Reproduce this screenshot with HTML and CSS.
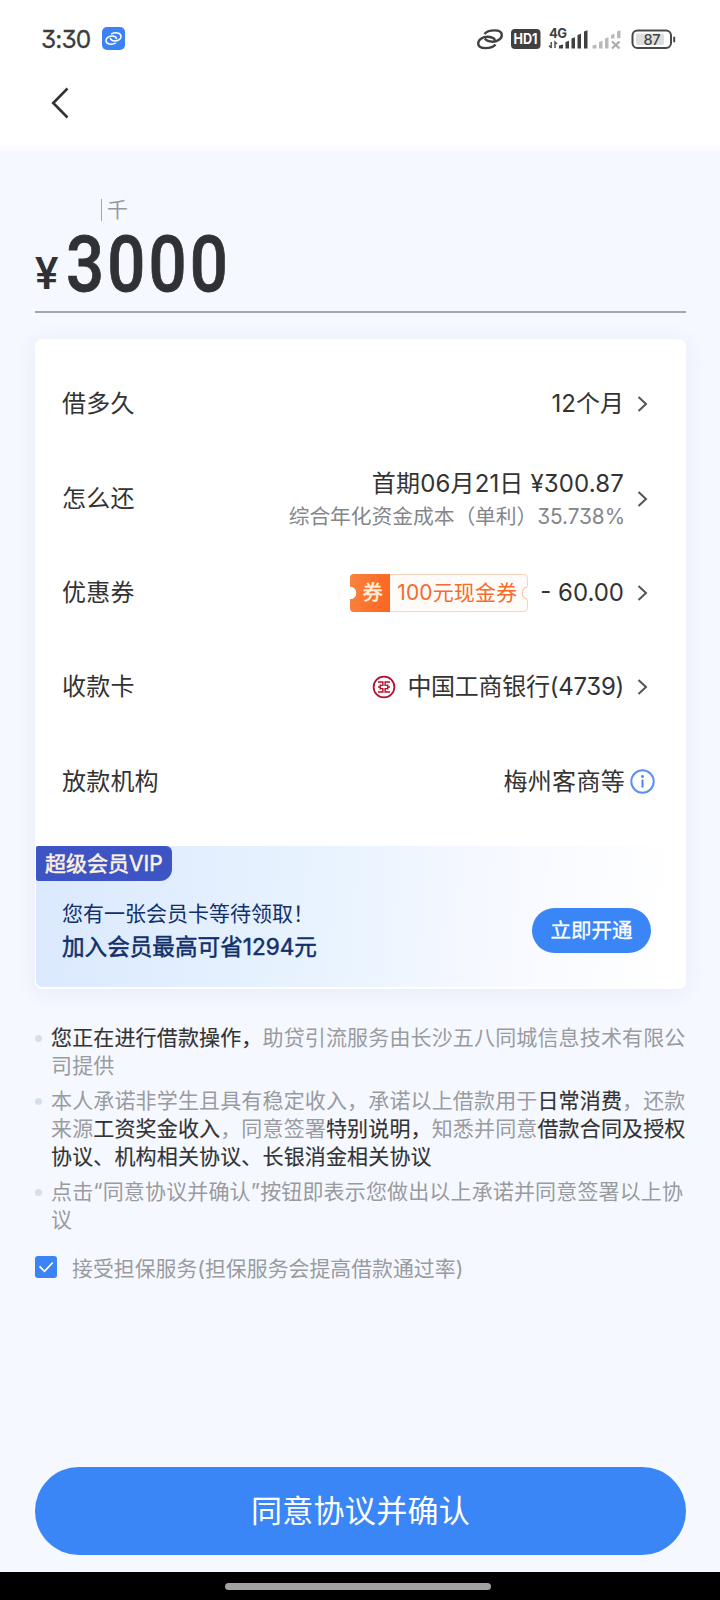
FILE: index.html
```html
<!DOCTYPE html>
<html lang="zh-CN">
<head>
<meta charset="utf-8">
<title>借款确认</title>
<link rel="stylesheet" href="styles.css">
</head>
<body>
<div class="screen">
  <header class="top">
    <div class="status">
      <span class="time">3:30</span>
      <svg class="app-icon" width="23" height="23" viewBox="0 0 23 23"><rect width="23" height="23" rx="5" fill="#3b82f7"/><g fill="none" stroke="#fff" stroke-width="1.500" stroke-linecap="round"><path d="M9.500 6.800C13 5 19 5.500 19 9.500C19 12.500 15.500 14 12.500 14C10.500 14 9 13 8.500 11.500"/><path d="M13.500 16.200C10 18 4 17.500 4 13.500C4 10.500 7.500 9 10.500 9C12.500 9 14 10 14.500 11.500"/></g></svg>
      <svg class="status-icons" width="204" height="30" viewBox="472 23 204 30">
        <g fill="none" stroke="#404040" stroke-width="2.400" stroke-linecap="butt"><path d="M484.500 33C488 28.500 501.800 27.500 501.800 34C501.800 38.500 496.500 40.700 492.500 40.700C489.500 40.700 486.500 39.800 484.800 37.600"/><path d="M495.500 43.500C492 48 478.200 49 478.200 42.500C478.200 38 483.500 35.800 487.500 35.800C490.500 35.800 493.500 36.700 495.200 38.900"/></g>
        <rect x="511" y="28" width="29.500" height="20" rx="4" fill="#404040"/>
        <text class="hd" x="513.500" y="42.800" textLength="24" lengthAdjust="spacingAndGlyphs">HD1</text>
        <text class="net" x="549" y="37" textLength="18">4G</text>
        <path d="M551.300 41v6M549 44.500l2.300 2.500M555 47v-6l2 2" fill="none" stroke="#555" stroke-width="1.500"/>
        <path d="M559 44.500l4-1v4h-4zM565.500 41l3.500-1.200v7.700h-3.500zM571.500 37.500l3.500-1.200v11.200h-3.500zM577.500 34l3.500-1.200v14.700h-3.500zM584 30.500l3.500-1.200v18.200h-3.500z" fill="#404040"/>
        <path d="M592.500 44.500l4-1v4h-4zM599 41l3.500-1.200v7.700h-3.500zM605 37.500l3.500-1.200v11.200h-3.500zM611 34l3.500-1.200v4.700h-3.500zM617 30.500l3.500-1.200v8h-3.500z" fill="#b9b9b9"/>
        <path d="M612 40.500l7.500 7M619.500 40.500l-7.500 7" stroke="#aaa" stroke-width="2.200"/>
        <rect x="632.500" y="29.500" width="38.500" height="17.500" rx="5" fill="none" stroke="#484848" stroke-width="2"/>
        <rect x="636" y="32.500" width="28" height="11.500" rx="2" fill="#dedede"/>
        <rect x="673.200" y="35.500" width="2" height="6" rx="1" fill="#484848"/>
        <text class="batt" x="643.500" y="43.500" textLength="17">87</text>
      </svg>
    </div>
    <svg class="back" width="20" height="32" viewBox="0 0 20 32"><path d="M17.500 1.500L3.200 16L17.500 30.500" fill="none" stroke="#333" stroke-width="2.600"/></svg>
  </header>

  <main class="content">
    <div class="unit">千</div>
    <div class="amount"><span class="yen">¥</span><span class="num">3000</span></div>

    <section class="card">
      <div class="row"><span class="label">借多久</span><span class="value">12个月</span><svg class="chev" width="12" height="18" viewBox="0 0 12 18"><path d="M1.500 2l7.500 7l-7.500 7" /></svg></div>
      <div class="row"><span class="label">怎么还</span><span class="value stack"><span class="first">首期06月21日 ¥300.87</span><small class="rate">综合年化资金成本（单利）35.738%</small></span><svg class="chev" width="12" height="18" viewBox="0 0 12 18"><path d="M1.500 2l7.500 7l-7.500 7" /></svg></div>
      <div class="row"><span class="label">优惠券</span>
        <span class="coupon"><span class="coupon-tag">券</span><span class="coupon-text">100元现金券</span><svg class="notch" width="9" height="14" viewBox="0 0 9 14"><path d="M9 0A7 7 0 0 0 9 14z" fill="#fff"/><path d="M8.500 .8A6.300 6.300 0 0 0 8.500 13.200" fill="none" stroke="#fbc9ad" stroke-width="1.200"/></svg></span>
        <span class="value discount">- 60.00</span><svg class="chev" width="12" height="18" viewBox="0 0 12 18"><path d="M1.500 2l7.500 7l-7.500 7" /></svg></div>
      <div class="row"><span class="label">收款卡</span>
        <svg class="bank" width="24" height="24" viewBox="0 0 24 24"><circle cx="12" cy="12" r="10.400" fill="none" stroke="#b5122f" stroke-width="1.800"/><path d="M6 7h4.900v3.400H8.300M6 10.400V10.400M8.300 9.600v4.800M8.300 13.600h2.600V17H6M18 7h-4.900v3.400h2.600M15.700 9.600v4.800M15.700 13.600h-2.600V17H18M6 12h2.300M15.700 12H18" fill="none" stroke="#b5122f" stroke-width="1.400"/></svg>
        <span class="value bank-name">中国工商银行(4739)</span><svg class="chev" width="12" height="18" viewBox="0 0 12 18"><path d="M1.500 2l7.500 7l-7.500 7" /></svg></div>
      <div class="row"><span class="label">放款机构</span><span class="value org">梅州客商等</span><svg class="info" width="25" height="25" viewBox="0 0 25 25"><circle cx="12.500" cy="12.500" r="11.200" fill="none" stroke="#5b8ff2" stroke-width="2"/><circle cx="12.500" cy="7.500" r="1.400" fill="#4485f3"/><path d="M12.500 10.500v8" stroke="#4485f3" stroke-width="2"/></svg></div>

      <div class="vip">
        <span class="vip-tag">超级会员VIP</span>
        <div class="vip-body">
          <div class="vip-copy"><span class="vip-line">您有一张会员卡等待领取！</span><b class="vip-strong">加入会员最高可省1294元</b></div>
          <button class="open">立即开通</button>
        </div>
      </div>
    </section>

    <ul class="terms">
      <li><b>您正在进行借款操作，</b>助贷引流服务由长沙五八同城信息技术有限公司提供</li>
      <li>本人承诺非学生且具有稳定收入，承诺以上借款用于<b>日常消费</b>，还款来源<b>工资奖金收入</b>，同意签署<b>特别说明，</b>知悉并同意<b>借款合同及授权协议、机构相关协议、长银消金相关协议</b></li>
      <li>点击“同意协议并确认”按钮即表示您做出以上承诺并同意签署以上协议</li>
    </ul>
    <div class="agree"><svg width="22" height="22" viewBox="0 0 22 22"><rect width="22" height="22" rx="3" fill="#3b84f5"/><path d="M4.500 10.300l5 5L17.800 6.500" fill="none" stroke="#fff" stroke-width="1.700"/></svg><span>接受担保服务(担保服务会提高借款通过率)</span></div>
    <button class="confirm">同意协议并确认</button>
  </main>
  <footer class="nav"><span class="pill"></span></footer>
</div>
</body>
</html>
```
FILE: styles.css
```css
* { box-sizing: border-box; }
body {
  margin: 0;
  font-family: Inter, "Noto Sans CJK SC", sans-serif;
  font-feature-settings: "cv09";
  color: #333;
  background: #f5f8ff;
}
button { border: 0; padding: 0; font: inherit; color: #fff; background: #3b86f7; }
svg { display: block; flex: none; }
.screen { width: 720px; height: 1600px; display: flex; flex-direction: column; overflow: hidden; }

.top { height: 152px; padding-top: 0.1px; background: linear-gradient(#fff 145px, #fafcff 146px, #fafcff 150px, #f5f8ff 152px); }
.status { display: flex; align-items: center; height: 30px; margin: 23px 0 0 41px; padding-top: 1px; }
.time { width: 61px; font-size: 24.5px; letter-spacing: -0.9px; white-space: nowrap; color: #3c3c3c; -webkit-text-stroke: 0.3px #3c3c3c; }
.status-icons { margin-left: 347px; }
.hd { font: 700 14px Inter, sans-serif; fill: #fff; }
.net { font: 700 13px Inter, sans-serif; fill: #404040; }
.batt { font: 500 14.5px Inter, sans-serif; fill: #444; }
.back { margin: 34px 0 0 50px; }

.content { flex: 1; display: flex; flex-direction: column; padding: 0 34px 0 35px; background: #f5f8ff; }
.unit {
  align-self: flex-start; height: 22px; margin: 47px 0 0 66px; padding-left: 5px;
  border-left: 1px solid #a5a8ae; font-size: 21px; line-height: 22px; color: #96989d;
}
.amount { display: flex; align-items: baseline; height: 92px; border-bottom: 2px solid #a2a6af; font-family: Roboto, sans-serif; line-height: 88px; color: #303134; }
.yen { width: 31px; font-size: 44px; font-weight: 500; transform: translate(0, -2px); }
.num { font-size: 78px; font-weight: 500; letter-spacing: 3.6px; transform: scaleX(.86); transform-origin: 0 50%; -webkit-text-stroke: 0.8px #303134; }

.card { height: 650px; margin-top: 26px; padding-top: 18px; display: flex; flex-direction: column; background: #fff; border-radius: 7px; box-shadow: 0 3px 22px rgba(60, 80, 140, .08); }
.row { flex: none; display: flex; align-items: center; height: 94.4px; padding: 0 37px 0 27px; font-size: 24px; white-space: nowrap; }
.label { margin-right: auto; letter-spacing: 0.2px; line-height: 34px; }
.value { line-height: 34px; }
.chev { margin-left: 13px; fill: none; stroke: #555; stroke-width: 2; }
.stack { display: flex; flex-direction: column; align-items: flex-end; padding-top: 2px; }
.first { letter-spacing: 0.15px; }
.rate { margin-right: -1px; font-size: 20.8px; line-height: 32px; letter-spacing: -0.08px; color: #85868a; }
.coupon {
  display: flex; width: 178px; height: 38px; position: relative; align-items: center; margin-right: 12px;
  border: 1px solid #f9d3bf; border-radius: 4px; background: #fffbf9; color: #f66b29; font-size: 21px;
}
.coupon-tag {
  display: flex; align-items: center; justify-content: center; width: 40px; height: 38px; margin: -1px 0 -1px -1px; padding: 0 0 2px 5px;
  color: #fff0dc; font-size: 20px; -webkit-text-stroke: 0.5px #fff0dc; border-radius: 4px 0 0 4px;
  background: radial-gradient(circle at 0 50%, #fff 6px, transparent 6.6px), linear-gradient(100deg, #fa8340, #fb651e);
}
.coupon-text { padding: 0 0 4px 7px; letter-spacing: 0.15px; }
.notch { position: absolute; right: -1px; top: 11px; }
.bank { margin-right: 11px; }
.bank-name { letter-spacing: -0.28px; }
.row:nth-child(5) { padding-right: 31px; }
.org { letter-spacing: 0.3px; }
.info { margin-left: 5px; }

.vip { height: 141px; margin: auto 0 2px 1px; border-radius: 0 0 6px 6px; background: linear-gradient(95deg, #dbe9fe 0%, #eaf4ff 48%, #f5f8ff 67%, #fff 97%); }
.vip-tag { display: block; width: 136px; height: 35px; padding-left: 9px; border-radius: 2px 6px 12px 2px; background: #3d54c5; color: #fff1df; font-size: 21px; line-height: 35px; white-space: nowrap; -webkit-text-stroke: 0.5px #fff1df; }
.vip-body { display: flex; justify-content: space-between; padding: 16px 35px 0 26px; color: #12306a; }
.vip-copy { display: flex; flex-direction: column; white-space: nowrap; }
.vip-line { font-size: 21px; line-height: 33px; }
.vip-strong { font-size: 22.6px; line-height: 33px; font-weight: 400; -webkit-text-stroke: 0.5px #12306a; }
.open { width: 119px; height: 45px; margin-top: 11px; border-radius: 23px; font-size: 20.5px; line-height: 45px; -webkit-text-stroke: 0.3px #fff; }

.terms { list-style: none; margin: 35px 0 0; padding: 0; width: 655px; font-size: 21px; line-height: 28px; letter-spacing: 0.15px; color: #999b9f; }
.terms li { position: relative; padding-left: 16px; margin-bottom: 7px; word-break: break-all; }
.terms li::before { content: ""; position: absolute; left: 0; top: 11px; width: 7px; height: 7px; border-radius: 50%; background: #d5dfec; }
.terms b { font-weight: 400; color: #333; -webkit-text-stroke: 0.15px #333; }
.agree { display: flex; align-items: center; gap: 15px; height: 30px; margin-top: 11px; font-size: 20.9px; color: #999b9f; white-space: nowrap; }
.agree span { line-height: 30px; padding-top: 3px; }
.confirm { flex: none; height: 88px; margin-top: auto; margin-bottom: 17px; padding-bottom: 6px; border-radius: 44px; font-size: 31px; letter-spacing: 0.3px; }
.nav { flex: none; height: 28px; display: flex; justify-content: center; align-items: center; background: #000; }
.pill { width: 266px; height: 7px; margin-right: 4px; border-radius: 4px; background: #a2a2a2; }
```
